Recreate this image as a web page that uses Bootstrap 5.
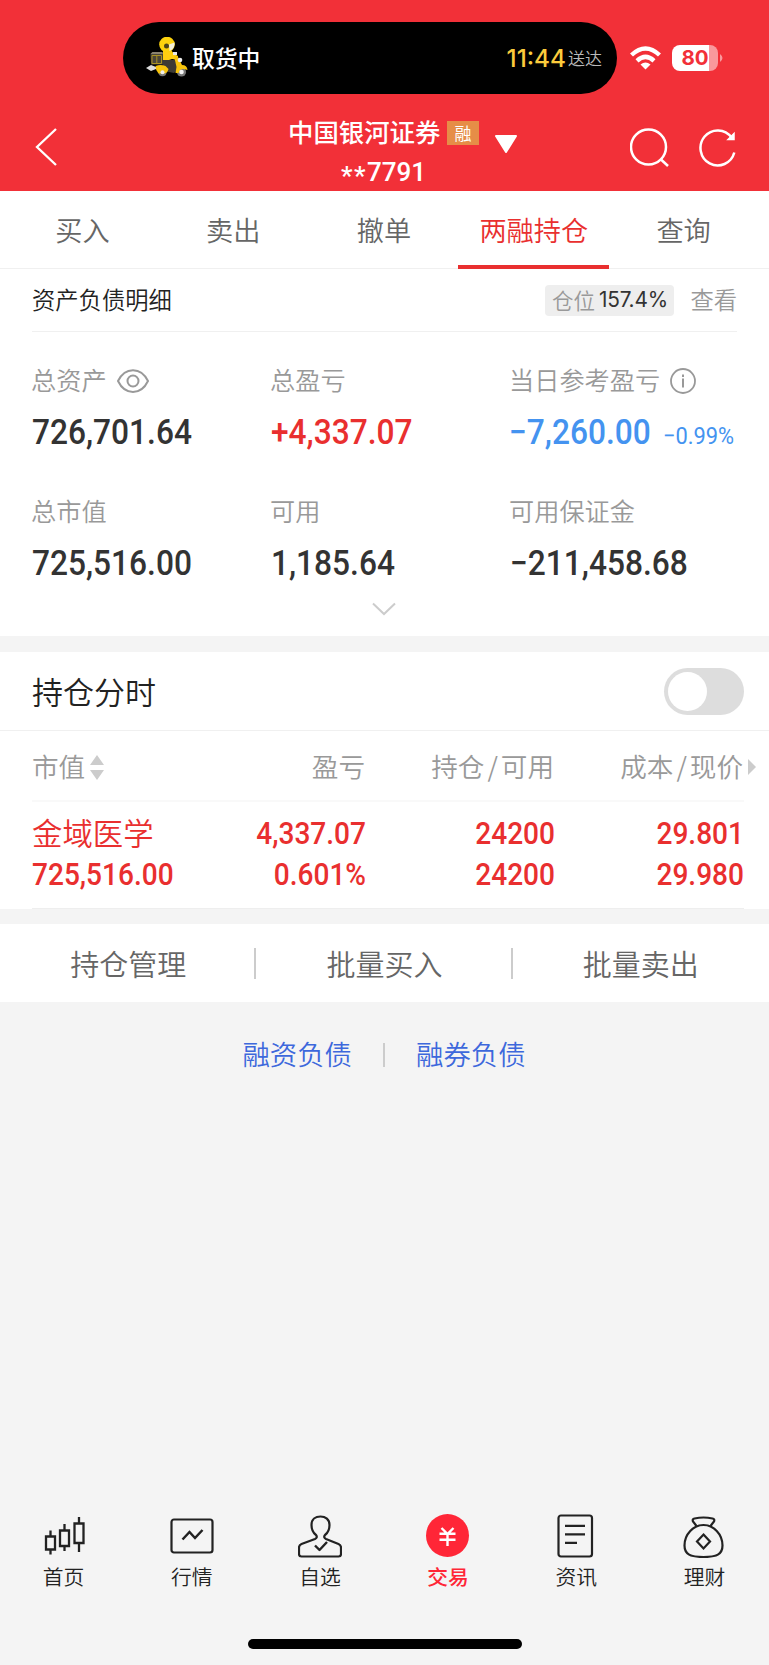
<!DOCTYPE html>
<html lang="zh-CN">
<head>
<meta charset="utf-8">
<meta name="viewport" content="width=device-width, initial-scale=1">
<title>两融持仓</title>
<link rel="stylesheet" href="https://cdn.jsdelivr.net/npm/bootstrap@5.3.0/dist/css/bootstrap.min.css">
<style>
:root{--red:#f23038;--up:#e92f2f;--down:#4493f0;--ink:#333;--mute:#999;--line:#f0f0f0;--bg:#f4f4f4}
body{font-family:"Noto Sans CJK SC","Noto Sans",sans-serif;font-weight:350;background:var(--bg);color:#222;line-height:1;width:769px;height:1665px;overflow:hidden}
svg{display:block;flex:none}
.cjk{position:relative;top:-1px;white-space:nowrap}
.num{font-family:Roboto,sans-serif;font-weight:500;display:inline-block;transform:scaleX(.905);transform-origin:0 50%;white-space:nowrap}
.num-end{transform-origin:100% 50%}
.topbar{background:var(--red);height:191px;color:#fff}
.status{padding:22px 0 0 123px;height:94px}
.island{width:494px;height:72px;border-radius:36px;background:#000;padding:0 15px 0 23px}
.courier{font-size:22.8px;font-weight:500;top:0}
.eta{font-family:Inter,sans-serif;font-size:24.3px;font-weight:500;color:#fbcb3c;margin-right:2px;padding-top:1px}
.eta-note{font-size:17px;color:#b9b9b9}
.battery{width:46px;height:26px;border-radius:8px;background:linear-gradient(90deg,#fff 37px,#f9989c 37px);color:var(--red);font-family:Inter,sans-serif;font-weight:700;font-size:20.5px;margin-left:11px}
.titlebar{height:97px}
.titlebar .back{width:288px;padding:34px 0 0 35px}
.broker{width:191px;padding-top:26px}
.broker-name{font-size:25.4px;font-weight:500;height:26px}
.tag{background:#e68d47;width:32px;height:24px;font-size:17px;font-weight:400}
.acct{font-family:Roboto,sans-serif;font-weight:500;font-size:26px;height:26px;margin-top:13px}
.acct span{position:relative;top:4px;letter-spacing:1.500px}
.tabs{height:78px;padding:0 10px 0 7px;border-bottom:1px solid var(--line)}
.tabs a{flex:1;font-size:27.2px;color:#666;text-decoration:none;height:78px}
.tabs .cjk{top:0}
.tabs a.on{color:var(--up);border-bottom:4px solid var(--up);padding-top:4px;margin:0 -1px}
.detail{height:63px;margin:0 32px;border-bottom:1px solid var(--line);font-size:23.3px}
.position-pill{background:#eee;border-radius:4px;height:31px;width:129px;font-size:21.5px;color:var(--mute)}
.position-pill b{font-family:Inter,sans-serif;font-weight:400;font-size:20.8px;letter-spacing:-.2px;color:#333}
.position-pill .cjk{top:0}
.assets{padding:31px 0 0 32px;height:304px}
.assets .row>*{width:239px;height:131px}
.lab{font-size:25.2px;color:var(--mute);height:36px}
.lab .cjk{left:-1px}
.lab svg{margin-left:9px}
.big{font-size:35px;height:36px;margin-top:15px;color:var(--ink)}
.up{color:var(--up)}.down{color:var(--down)}
.down .num:first-child{left:-1px;position:relative}
.pct{font-size:24px;font-weight:400;position:relative;top:4px;transform:scaleX(.91);margin-left:-4px}
.gap-band{height:16px;background:var(--bg)}
.switchrow{height:79px;padding:0 25px 0 32px;border-bottom:1px solid var(--line);font-size:31px}
.toggle{width:80px;height:47px;border-radius:24px;background:#ddd;padding:4px}
.toggle i{width:39px;height:39px;border-radius:50%;background:#fff;display:block}
.hold{display:grid;grid-template-columns:112px 222px 189px 189px;margin:0 25px 0 32px}
.hold>*{white-space:nowrap}
.hold-head{height:71px;padding-top:3px;font-size:26.6px;color:var(--mute);border-bottom:2px solid #f9f9f9}
.hold-body{height:107px;padding-top:11px;border-bottom:1px solid #eee;color:var(--up);font-size:31px}
.hold-body>div>*{height:41px;line-height:41px;display:block}
.hold-body>.text-end{padding-right:0}
.stock{font-size:30.4px}
.acts{height:78px;font-size:29px;color:#666}
.acts>*{flex:1;height:31px}
.acts>*+*{box-shadow:-2px 0 #ccc}
.debts{height:105px;color:#3d68dc;font-size:27.4px;gap:31px;padding-right:1px}
.debts i{width:2px;height:24px;background:#ccc}
.bottom{height:170px;margin-top:auto}
.bottom a{flex:1;color:#222;text-decoration:none;font-size:20.8px;padding-top:19px}
.bottom .cjk{left:-.500px;top:0}
.bottom svg{margin:0 1px 8px 0}
.bottom a.on{color:#ff2637;font-weight:500}
.homebar{width:274px;height:10px;border-radius:5px;background:#000;margin:0 auto 16px}
</style>
</head>
<body class="d-flex flex-column">
<header class="topbar">
  <div class="status d-flex align-items-center">
    <div class="island d-flex align-items-center">
      <svg width="42" height="42" viewBox="0 0 42 42">
        <path d="M0 31l5-3 5 2v2l-5 2z" fill="#ddd"/>
        <circle cx="16.500" cy="35.300" r="4" fill="#777"/><circle cx="35.500" cy="35" r="4.600" fill="#777"/>
        <path d="M4.500 17l2-2H17v12.500H5z" fill="#4a4538"/><path d="M4.500 17l2-2h9.500l1 2z" fill="#8a8370"/>
        <path d="M6 18.500h9.500v8H6zM10.800 18.500v8" fill="none" stroke="#a89022"/>
        <path d="M16 23h13l3 10-4 3-10-2z" fill="#3c3a34"/>
        <path d="M17 14l8-1 3 4 4 2v4l-6-1-3 1h-6z" fill="#ffcf10"/>
        <path d="M9.500 29q5-2 10 0l3 3q-1 4-4 4.500h-6Q9.500 33 9.500 29z" fill="#f7c40c"/>
        <path d="M28 19l4 1 4 8q5 0 5.500 5l-4-1q-4 0-5 4h-3l1-6z" fill="#f7c40c"/>
        <circle cx="16.500" cy="35.300" r="2" fill="#eee"/><circle cx="35.500" cy="35" r="2.300" fill="#f4f4f4"/>
        <circle cx="34" cy="23" r="2.300" fill="#eee"/><path d="M27 15h4v3h-4z" fill="#e8e8e8"/>
        <circle cx="21" cy="7.500" r="7.800" fill="#fdd20d"/><path d="M23 7.500l5.600-2q.5 6-5 8.500z" fill="#f5f1de"/><circle cx="20.500" cy="9" r="2.500" fill="#4d4417"/>
      </svg>
      <span class="cjk courier ms-1">取货中</span>
      <span class="eta ms-auto">11:44</span><span class="cjk eta-note">送达</span>
    </div>
    <svg style="margin-left:13px" width="31" height="24" viewBox="0 0 31 24" fill="none" stroke="#fff" stroke-width="4.400">
      <path d="M1.500 9Q15.500-4 29.500 9"/><path d="M7 14.800Q15.500 7 24 14.800"/><path d="M10.500 18.500Q15.500 14.500 20.500 18.500L15.500 23.500z" fill="#fff" stroke="none"/>
    </svg>
    <div class="battery d-flex align-items-center justify-content-center">80</div>
    <svg style="margin-left:2px" width="4" height="8" viewBox="0 0 4 8"><path d="M0 0q5 4 0 8z" fill="#f9989c"/></svg>
  </div>
  <div class="titlebar d-flex">
    <a class="back" href="#"><svg width="22" height="38" viewBox="0 0 22 38" fill="none" stroke="#fff" stroke-width="2.300"><path d="M21 1L2 19l19 18"/></svg></a>
    <div class="broker">
      <div class="broker-name d-flex align-items-center justify-content-between"><span class="cjk">中国银河证券</span><span class="tag d-flex align-items-center justify-content-center"><span class="cjk">融</span></span></div>
      <div class="acct d-flex align-items-center justify-content-center"><span>**</span>7791</div>
    </div>
    <svg style="margin:41px 0 0 15px" width="24" height="19" viewBox="0 0 24 19"><path d="M2 1h20L12 17z" fill="#fff" stroke="#fff" stroke-width="2" stroke-linejoin="round"/></svg>
    <svg style="margin:34px 0 0 112px" width="39" height="39" viewBox="0 0 39 39" fill="none" stroke="#fff" stroke-width="2.500"><circle cx="18.500" cy="19" r="17.500"/><path d="M31 31.500l7 6.500"/></svg>
    <svg style="margin:34px 0 0 30px" width="38" height="39" viewBox="0 0 38 39" fill="none" stroke="#fff" stroke-width="2.500"><path d="M32.500 9.500A17.200 17.500 0 1 0 35.300 24.500"/><path d="M35 5.500v6h-6z" fill="#fff" stroke-width="1.500"/></svg>
  </div>
</header>
<main class="bg-white">
  <nav class="tabs d-flex">
    <a href="#" class="d-flex align-items-center justify-content-center"><span class="cjk">买入</span></a>
    <a href="#" class="d-flex align-items-center justify-content-center"><span class="cjk">卖出</span></a>
    <a href="#" class="d-flex align-items-center justify-content-center"><span class="cjk">撤单</span></a>
    <a href="#" class="on d-flex align-items-center justify-content-center"><span class="cjk">两融持仓</span></a>
    <a href="#" class="d-flex align-items-center justify-content-center"><span class="cjk">查询</span></a>
  </nav>
  <div class="detail d-flex align-items-center">
    <span class="cjk" style="top:0">资产负债明细</span>
    <div class="position-pill ms-auto d-flex align-items-center justify-content-center gap-1"><span class="cjk">仓位</span><b>157.4%</b></div>
    <span class="cjk" style="margin-left:16px;color:#999;top:0">查看</span>
  </div>
  <section class="assets">
    <div class="row g-0">
      <div><div class="lab d-flex align-items-center"><span class="cjk">总资产</span>
        <svg width="32" height="24" viewBox="0 0 32 24" fill="none" stroke="#999" stroke-width="2"><path d="M1 12C8-2.500 24-2.500 31 12C24 26.500 8 26.500 1 12z"/><circle cx="16" cy="12" r="5.500"/></svg></div>
        <div class="big d-flex align-items-center"><span class="num">726,701.64</span></div></div>
      <div><div class="lab d-flex align-items-center"><span class="cjk">总盈亏</span></div>
        <div class="big up d-flex align-items-center"><span class="num">+4,337.07</span></div></div>
      <div><div class="lab d-flex align-items-center"><span class="cjk">当日参考盈亏</span>
        <svg width="26" height="26" viewBox="0 0 26 26" fill="none" stroke="#999" stroke-width="1.800"><circle cx="13" cy="13" r="12"/><path d="M13 10.500v9M13 6.500v2.500" stroke-width="2"/></svg></div>
        <div class="big down d-flex align-items-center"><span class="num">−7,260.00</span><span class="num pct">−0.99%</span></div></div>
      <div><div class="lab d-flex align-items-center"><span class="cjk">总市值</span></div>
        <div class="big d-flex align-items-center"><span class="num">725,516.00</span></div></div>
      <div><div class="lab d-flex align-items-center"><span class="cjk">可用</span></div>
        <div class="big d-flex align-items-center"><span class="num">1,185.64</span></div></div>
      <div><div class="lab d-flex align-items-center"><span class="cjk">可用保证金</span></div>
        <div class="big d-flex align-items-center"><span class="num">−211,458.68</span></div></div>
    </div>
    <svg style="margin:-23px 0 0 340px" width="24" height="14" viewBox="0 0 24 14" fill="none" stroke="#ccc" stroke-width="2"><path d="M1 1.500l11 10.500L23 1.500"/></svg>
  </section>
  <div class="gap-band"></div>
  <div class="switchrow d-flex align-items-center justify-content-between"><span class="cjk">持仓分时</span><div class="toggle"><i></i></div></div>
  <div class="hold hold-head align-items-center">
    <div class="d-flex align-items-center"><span class="cjk">市值</span><svg style="margin-left:5px" width="14" height="25" viewBox="0 0 14 25" fill="#ccc"><path d="M0 10L7 0l7 10zM0 15h14l-7 10z"/></svg></div>
    <div class="text-end"><span class="cjk" style="left:-1px">盈亏</span></div>
    <div class="text-end"><span class="cjk" style="left:-1px">持仓<span style="padding:0 3px">/</span>可用</span></div>
    <div class="d-flex align-items-center justify-content-end" style="margin-right:-12px"><span class="cjk">成本<span style="padding:0 3px">/</span>现价</span><svg style="margin-left:5px" width="8" height="16" viewBox="0 0 8 16" fill="#ccc"><path d="M0 0l8 8-8 8z"/></svg></div>
  </div>
  <div class="hold hold-body">
    <div><span class="cjk stock">金域医学</span><span class="num">725,516.00</span></div>
    <div class="text-end"><span class="num num-end">4,337.07</span><span class="num num-end">0.601%</span></div>
    <div class="text-end"><span class="num num-end">24200</span><span class="num num-end">24200</span></div>
    <div class="text-end"><span class="num num-end">29.801</span><span class="num num-end">29.980</span></div>
  </div>
  <div class="gap-band" style="height:15px"></div>
  <div class="acts d-flex align-items-center text-center">
    <div><span class="cjk" style="top:1px">持仓管理</span></div><div><span class="cjk" style="top:1px">批量买入</span></div><div><span class="cjk" style="top:1px">批量卖出</span></div>
  </div>
</main>
<div class="debts d-flex align-items-center justify-content-center"><span class="cjk">融资负债</span><i></i><span class="cjk">融券负债</span></div>
<nav class="bottom d-flex flex-column">
  <div class="d-flex flex-grow-1">
  <a href="#" class="d-flex flex-column align-items-center"><svg width="44" height="44" viewBox="0 0 44 44" fill="none" stroke="#222" stroke-width="2.300"><path d="M4 22.500h9v13H4zM8.500 16.500v6M8.500 35.500v5M18 16.500h9v15.500h-9zM22.500 10v6.500M22.500 32v5M32.500 9.500h9v19.500h-9zM37 3v6.500M37 29v9"/></svg><span class="cjk">首页</span></a>
  <a href="#" class="d-flex flex-column align-items-center"><svg width="44" height="44" viewBox="0 0 44 44" fill="none" stroke="#222" stroke-width="2.200"><rect x="1.500" y="5.500" width="41" height="33" rx="2.500"/><path d="M12.500 25.500l7-7.500 5.500 6 7.500-8" stroke-width="2.500"/></svg><span class="cjk">行情</span></a>
  <a href="#" class="d-flex flex-column align-items-center"><svg width="44" height="44" viewBox="0 0 44 44" fill="none" stroke="#222" stroke-width="2.200" stroke-linejoin="round"><path d="M18 21q2 2.500-1 4L3.500 30Q1 31 1 33.500v6.500Q1 42.500 3.500 42.500h37q2.500 0 2.500-2.500V33.500q0-2.500-2.500-3.500L28 25q-3-1.500-1-4C31 18 31.500 14.500 31.500 11C31.500 5.500 27.500 2.500 22.500 2.500S13.500 5.500 13.500 11C13.500 14.500 14 18 18 21z"/><path d="M17 31.500l4.500 4.500 7.500-8" stroke-width="2.400"/></svg><span class="cjk">自选</span></a>
  <a href="#" class="on d-flex flex-column align-items-center"><svg width="44" height="44" viewBox="0 0 44 44" fill="none" stroke="#fff" stroke-width="2.400"><circle cx="21.500" cy="21.500" r="21.500" fill="#ff2637" stroke="none"/><path d="M15.500 14l6 6 6-6M13.500 19.800h16M13.500 25.700h16M21.500 19.500V32"/></svg><span class="cjk">交易</span></a>
  <a href="#" class="d-flex flex-column align-items-center"><svg width="44" height="44" viewBox="0 0 44 44" fill="none" stroke="#222" stroke-width="2.200"><rect x="4.500" y="1.500" width="33.500" height="41" rx="2.500"/><path d="M11 11.800h20M11 20.300h20M11 28.800h12" stroke-width="2.300"/></svg><span class="cjk">资讯</span></a>
  <a href="#" class="d-flex flex-column align-items-center"><svg width="44" height="44" viewBox="0 0 44 44" fill="none" stroke="#222" stroke-width="2.200"><path d="M14.500 12L11 7.500Q10 5 12.500 4.500Q21.500 2.500 30.500 4.500q2.500.500 1.500 3L28.500 12"/><path d="M21.500 11C11.500 11 2.500 20 2.500 31.500C2.500 40.500 8.500 43 21.500 43S40.500 40.500 40.500 31.500C40.500 20 31.500 11 21.500 11z"/><path d="M21.500 20.500l6.500 7-6.500 7-6.500-7z"/></svg><span class="cjk">理财</span></a>
  </div>
  <div class="homebar"></div>
</nav>
<script src="https://cdn.jsdelivr.net/npm/bootstrap@5.3.0/dist/js/bootstrap.bundle.min.js"></script>
</body>
</html>
